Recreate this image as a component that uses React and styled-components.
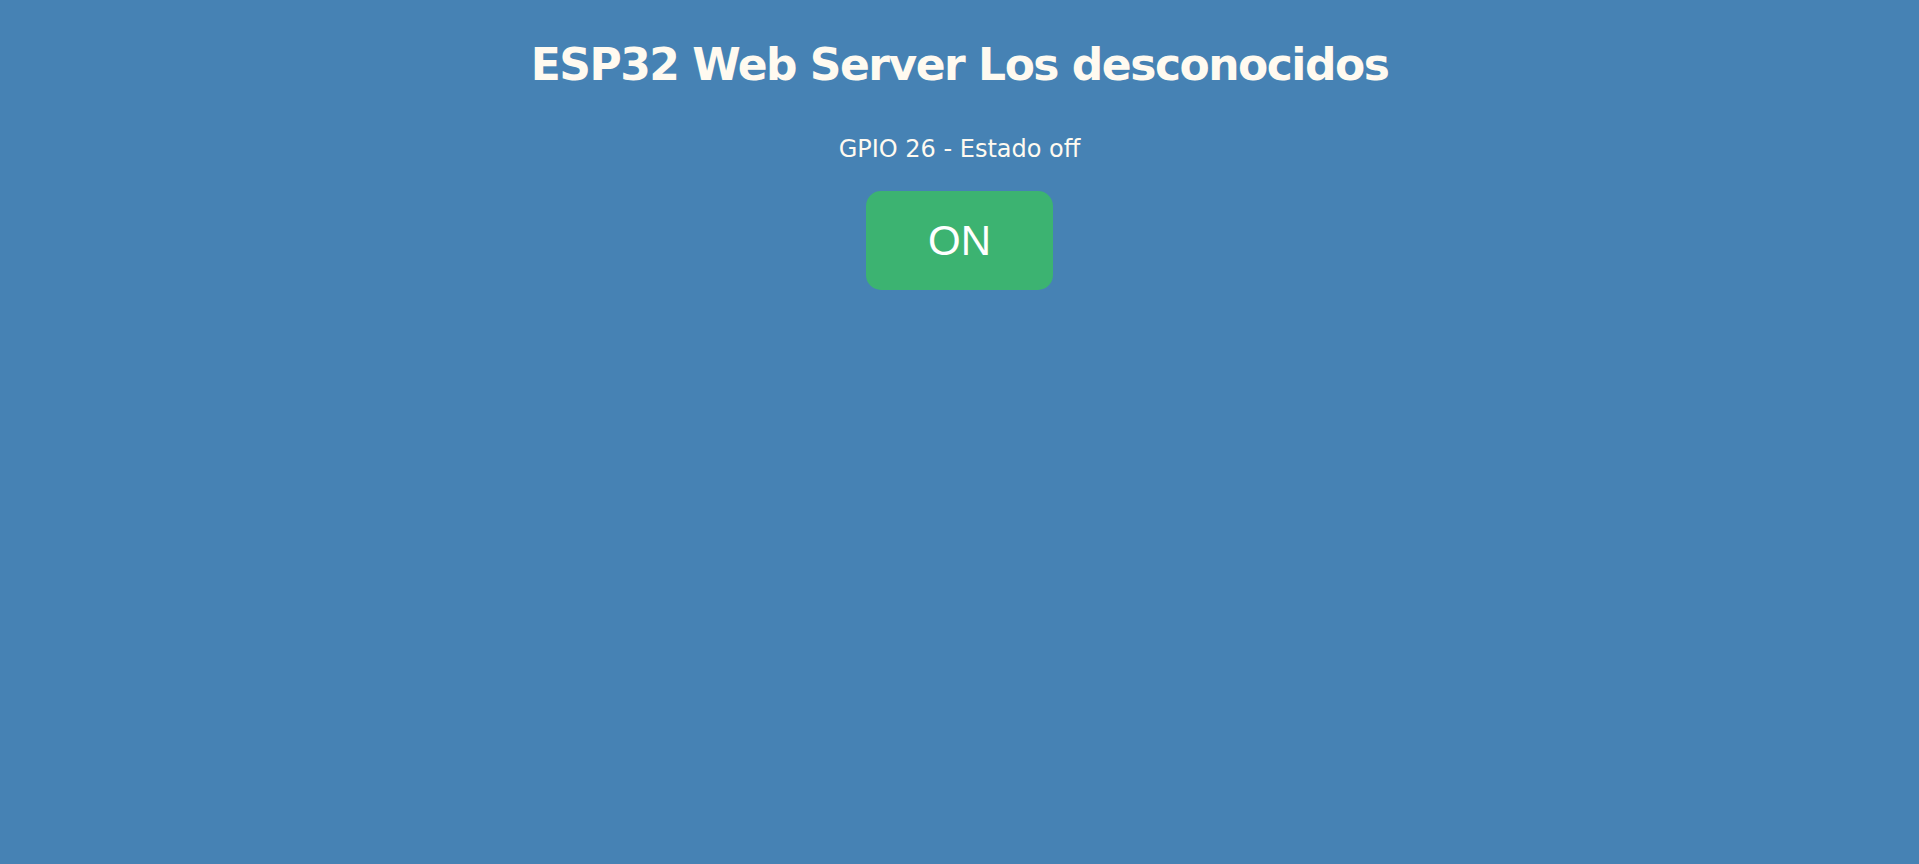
import styled, { createGlobalStyle } from "styled-components";

const GlobalStyle = createGlobalStyle`
    html, body {
        margin: 0;
        padding: 0;
        background-color: #4682b4;
        min-height: 100%;
    }
    body {
        height: 864px;
        font-family: "Comic Sans MS", "DejaVu Sans", sans-serif;
    }
`;

const Page = styled.div`
    display: flex;
    flex-direction: column;
    align-items: center;
    text-align: center;
    color: #fffaf0;
`;

const Title = styled.h1`
    margin: 37px 0 0;
    font-size: 44px;
    line-height: 56px;
    letter-spacing: -1.5px;
    font-weight: bold;
    font-family: "Comic Sans MS", "DejaVu Sans", sans-serif;
`;

const Status = styled.p`
    margin: 41px 0 0;
    font-size: 24px;
    line-height: 30px;
    font-family: "Comic Sans MS", "DejaVu Sans", sans-serif;
`;

const Button = styled.button`
    margin-top: 27px;
    width: 187px;
    height: 99px;
    border: none;
    border-radius: 15px;
    background-color: #3cb371;
    color: #ffffff;
    font-family: "Liberation Sans", Arial, sans-serif;
    font-size: 42px;
    cursor: pointer;
`;

const App = () => {
    return (
        <>
            <GlobalStyle />
            <Page>
                <Title>ESP32 Web Server Los desconocidos</Title>
                <Status>GPIO 26 - Estado off</Status>
                <Button>ON</Button>
            </Page>
        </>
    );
};

export default App;
